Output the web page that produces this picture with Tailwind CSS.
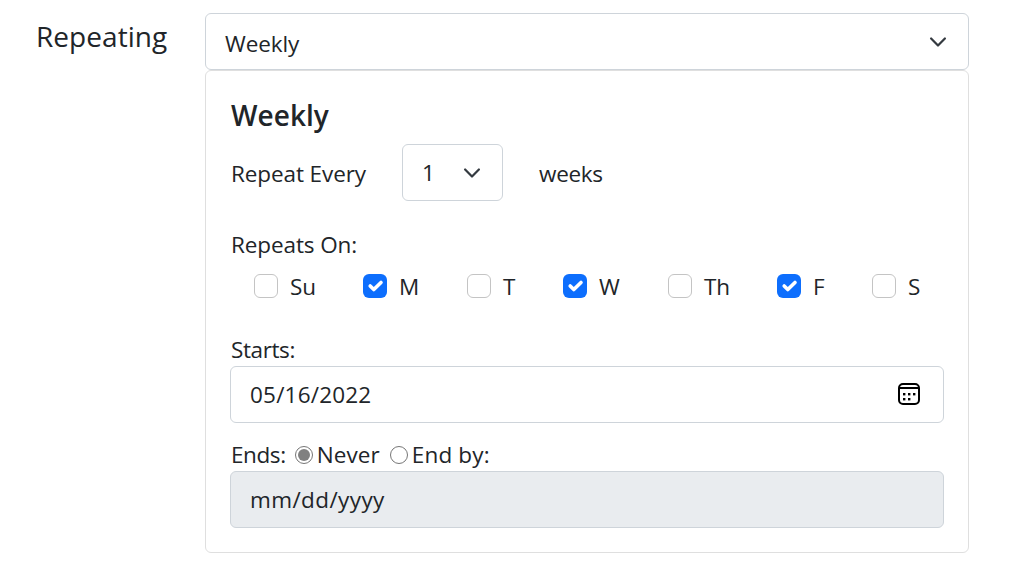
<!DOCTYPE html>
<html lang="en">
<head>
    <meta charset="UTF-8">
    <title>Repeating</title>
    <script src="https://cdn.jsdelivr.net/npm/@tailwindcss/browser@4"></script>
</head>
<body class="bg-white text-[#212529] font-['Open_Sans',sans-serif] text-[22.5px] tracking-[-0.1px] overflow-hidden">
    <div class="flex w-[1023px] h-[580px] pt-[13px] pl-[36px]">
        <!-- label -->
        <div class="w-[169px] text-[28px] leading-[46px] tracking-[0.05px]">Repeating</div>

        <div class="w-[764px]">
            <!-- main select -->
            <div class="flex items-center justify-between h-[57px] pl-[19px] pr-[18px] border border-[#ced4da] rounded-[6px]">
                <span class="pt-[4px]">Weekly</span>
                <svg class="w-[24px] h-[24px]" viewBox="0 0 16 16" fill="none" stroke="#343a40" stroke-width="1.5" stroke-linecap="round" stroke-linejoin="round"><path d="M3.4 5.7L8 10.3l4.6-4.6"/></svg>
            </div>

            <!-- weekly card -->
            <div class="h-[483px] px-[24px] border border-[#dfdfdf] rounded-[6px]">
                <div class="ml-[1px] pt-[22px] text-[28px] leading-[44px] font-semibold tracking-[0.05px]">Weekly</div>

                <div class="flex items-center ml-[1px] mt-[7px]">
                    <span class="w-[171px] pt-[2px]">Repeat Every</span>
                    <div class="flex items-center justify-between w-[101px] h-[57px] pl-[19px] pr-[18px] border border-[#ced4da] rounded-[6px]">
                        <span>1</span>
                        <svg class="w-[24px] h-[24px]" viewBox="0 0 16 16" fill="none" stroke="#343a40" stroke-width="1.5" stroke-linecap="round" stroke-linejoin="round"><path d="M3.4 5.7L8 10.3l4.6-4.6"/></svg>
                    </div>
                    <span class="ml-[36px] pt-[2px] tracking-[-0.3px]">weeks</span>
                </div>

                <div class="ml-[1px] mt-[26px] leading-[36px]">Repeats On:</div>

                <!-- days -->
                <div class="flex items-center h-[36px] mt-[6px] pl-[24px]">
                    <div class="flex items-center w-[109px] gap-[12px]">
                        <span class="w-[24px] h-[24px] mb-[3px] border border-[#c4c4c4] rounded-[6px]"></span><span>Su</span>
                    </div>
                    <div class="flex items-center w-[104px] gap-[12px]">
                        <span class="flex items-center justify-center w-[24px] h-[24px] mb-[3px] bg-[#0d6efd] rounded-[6px]">
                            <svg class="w-[24px] h-[24px]" viewBox="0 0 20 20" fill="none" stroke="#fff" stroke-width="3" stroke-linecap="round" stroke-linejoin="round"><path d="M6 10l3 3 6-6"/></svg>
                        </span><span>M</span>
                    </div>
                    <div class="flex items-center w-[96px] gap-[12px]">
                        <span class="w-[24px] h-[24px] mb-[3px] border border-[#c4c4c4] rounded-[6px]"></span><span>T</span>
                    </div>
                    <div class="flex items-center w-[105px] gap-[12px]">
                        <span class="flex items-center justify-center w-[24px] h-[24px] mb-[3px] bg-[#0d6efd] rounded-[6px]">
                            <svg class="w-[24px] h-[24px]" viewBox="0 0 20 20" fill="none" stroke="#fff" stroke-width="3" stroke-linecap="round" stroke-linejoin="round"><path d="M6 10l3 3 6-6"/></svg>
                        </span><span>W</span>
                    </div>
                    <div class="flex items-center w-[109px] gap-[12px]">
                        <span class="w-[24px] h-[24px] mb-[3px] border border-[#c4c4c4] rounded-[6px]"></span><span>Th</span>
                    </div>
                    <div class="flex items-center w-[95px] gap-[12px]">
                        <span class="flex items-center justify-center w-[24px] h-[24px] mb-[3px] bg-[#0d6efd] rounded-[6px]">
                            <svg class="w-[24px] h-[24px]" viewBox="0 0 20 20" fill="none" stroke="#fff" stroke-width="3" stroke-linecap="round" stroke-linejoin="round"><path d="M6 10l3 3 6-6"/></svg>
                        </span><span>F</span>
                    </div>
                    <div class="flex items-center gap-[12px]">
                        <span class="w-[24px] h-[24px] mb-[3px] border border-[#c4c4c4] rounded-[6px]"></span><span>S</span>
                    </div>
                </div>

                <div class="ml-[1px] mt-[27px] leading-[36px] tracking-[-0.4px]">Starts:</div>
                <div class="flex items-center justify-between h-[57px] -mt-[2px] pl-[19px] pr-[23px] border border-[#ced4da] rounded-[6px]">
                    <span class="pt-[1px] tracking-[0.2px]">05/16/2022</span>
                    <svg class="w-[22px] h-[22px] mb-[2px]" viewBox="0 0 22 22" fill="none">
                        <rect x="1" y="1" width="20" height="20" rx="4" stroke="#000" stroke-width="2"/>
                        <path d="M1 5h20" stroke="#000" stroke-width="2"/>
                        <g fill="#000"><rect x="5" y="10" width="2.4" height="2.4"/><rect x="10" y="10" width="2.4" height="2.4"/><rect x="15" y="10" width="2.4" height="2.4"/><rect x="5" y="15" width="2.4" height="2.4"/><rect x="10" y="15" width="2.4" height="2.4"/></g>
                    </svg>
                </div>

                <div class="flex items-center ml-[1px] h-[36px] mt-[14px]">
                    <span class="tracking-[-0.4px]">Ends:</span>
                    <span class="flex items-center justify-center w-[18px] h-[18px] ml-[9px] mr-[4px] border border-[#767676] rounded-full"><span class="w-[12px] h-[12px] bg-[#808080] rounded-full"></span></span>
                    <span class="tracking-[0.1px]">Never</span>
                    <span class="w-[18px] h-[18px] ml-[10px] mr-[4px] border border-[#767676] rounded-full"></span>
                    <span class="tracking-[0.15px]">End by:</span>
                </div>
                <div class="h-[57px] -mt-[2px] pt-[1px] pl-[19px] flex items-center bg-[#e9ecef] border border-[#ced4da] rounded-[6px] tracking-[0.4px]">mm/dd/yyyy</div>
            </div>
        </div>
    </div>
</body>
</html>
